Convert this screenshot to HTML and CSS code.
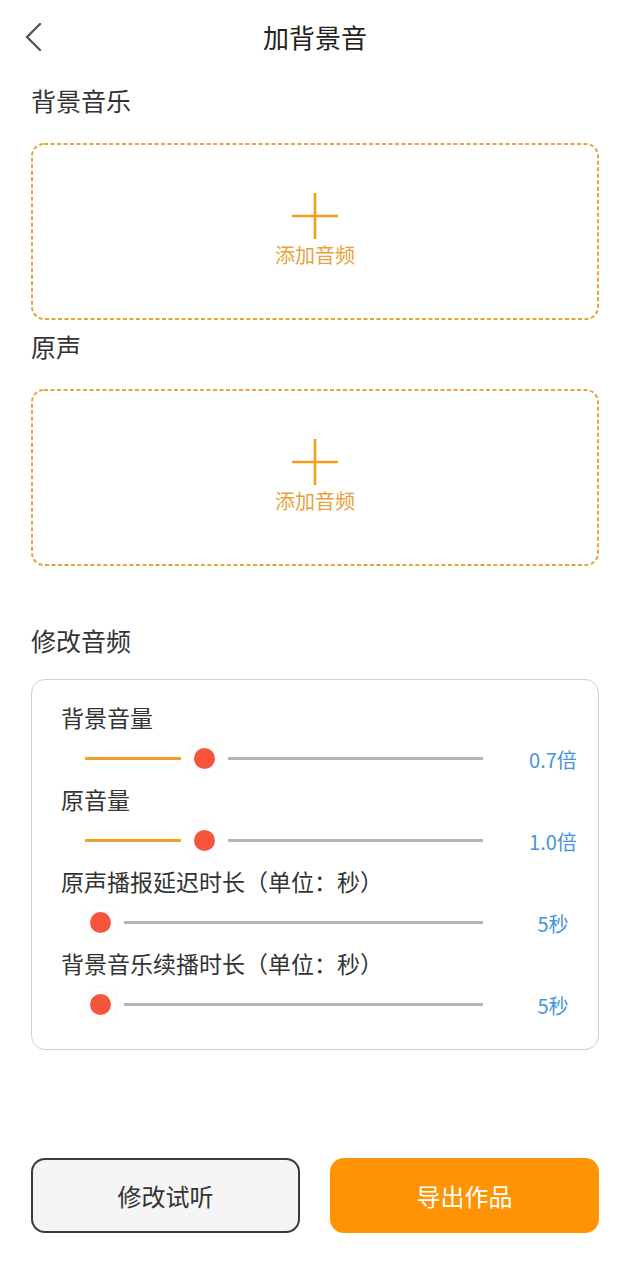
FILE: index.html
```html
<!DOCTYPE html>
<html lang="zh-CN">
<head>
<meta charset="utf-8">
<title>加背景音</title>
<link rel="stylesheet" href="styles.css">
</head>
<body>
<header class="header">
  <span class="back">
    <svg width="18" height="28" viewBox="0 0 18 28"><polyline points="15,1 2,14 15,27" fill="none" stroke="#555" stroke-width="2.4" stroke-linecap="round" stroke-linejoin="round"/></svg>
  </span>
  <h1 class="title">加背景音</h1>
  <span></span>
</header>
<main class="content">
  <div class="section-title">背景音乐</div>
  <div class="dropzone">
    <svg class="dash-border" aria-hidden="true"><rect class="dash-rect" x="1" y="1" rx="12" ry="12"/></svg>
    <svg class="plus" width="46" height="46" viewBox="0 0 46 46"><path d="M0 23H46M23 0V46" stroke="#f29c1f" stroke-width="2.6"/></svg>
    <div class="drop-text">添加音频</div>
  </div>
  <div class="section-title">原声</div>
  <div class="dropzone">
    <svg class="dash-border" aria-hidden="true"><rect class="dash-rect" x="1" y="1" rx="12" ry="12"/></svg>
    <svg class="plus" width="46" height="46" viewBox="0 0 46 46"><path d="M0 23H46M23 0V46" stroke="#f29c1f" stroke-width="2.6"/></svg>
    <div class="drop-text">添加音频</div>
  </div>
  <div class="section-title section-gap">修改音频</div>
  <div class="card">
    <div class="row-label">背景音量</div>
    <div class="slider-row">
      <div class="track">
        <div class="fill" style="width:104px"></div>
        <div class="thumb-wrap"><span class="thumb"></span></div>
        <div class="rest"></div>
      </div>
      <div class="value">0.7倍</div>
    </div>
    <div class="row-label">原音量</div>
    <div class="slider-row">
      <div class="track">
        <div class="fill" style="width:104px"></div>
        <div class="thumb-wrap"><span class="thumb"></span></div>
        <div class="rest"></div>
      </div>
      <div class="value">1.0倍</div>
    </div>
    <div class="row-label">原声播报延迟时长（单位：秒）</div>
    <div class="slider-row">
      <div class="track">
        <div class="fill" style="width:0px"></div>
        <div class="thumb-wrap"><span class="thumb"></span></div>
        <div class="rest"></div>
      </div>
      <div class="value">5秒</div>
    </div>
    <div class="row-label">背景音乐续播时长（单位：秒）</div>
    <div class="slider-row">
      <div class="track">
        <div class="fill" style="width:0px"></div>
        <div class="thumb-wrap"><span class="thumb"></span></div>
        <div class="rest"></div>
      </div>
      <div class="value">5秒</div>
    </div>
  </div>
  <div class="actions">
    <button class="btn btn-outline">修改试听</button>
    <button class="btn btn-primary">导出作品</button>
  </div>
</main>
</body>
</html>
```
FILE: styles.css
```css
* { box-sizing: border-box; }
html, body {
  margin: 0;
  padding: 0;
  background: #fff;
  font-family: "Noto Sans CJK SC", "Noto Sans", sans-serif;
  color: #333;
}
.header {
  height: 74px;
  display: grid;
  grid-template-columns: 80px 1fr 80px;
  align-items: center;
  padding: 0 0 0 25px;
}
.back {
  display: flex;
  align-items: center;
  height: 28px;
}
.title {
  margin: 0;
  text-align: center;
  font-size: 26px;
  font-weight: 400;
  color: #222;
  line-height: 74px;
  padding-right: 25px;
}
.content {
  padding: 0 31px;
}
.section-title {
  height: 52px;
  line-height: 52px;
  font-size: 25px;
  color: #333;
}
.section-gap {
  margin-top: 48px;
}
.dropzone {
  position: relative;
  margin-top: 17px;
  height: 177px;
  display: flex;
  flex-direction: column;
  align-items: center;
  justify-content: center;
  padding-bottom: 4px;
}
.dash-border {
  position: absolute;
  left: 0;
  top: 0;
  width: 100%;
  height: 100%;
  pointer-events: none;
}
.dash-rect {
  width: calc(100% - 2px);
  height: calc(100% - 2px);
  fill: none;
  stroke: #e2a73a;
  stroke-width: 2;
  stroke-dasharray: 4 2.5;
}
.plus { display: block; }
.drop-text {
  margin-top: 5px;
  font-size: 20px;
  line-height: 22px;
  color: #eaa13a;
}
.card {
  margin-top: 13px;
  border: 1.5px solid #cfcfcf;
  border-radius: 14px;
  padding: 21px 2px 20px 29px;
}
.row-label {
  height: 32px;
  line-height: 32px;
  font-size: 23px;
  color: #333;
}
.slider-row {
  height: 50px;
  display: flex;
  align-items: center;
}
.track {
  margin-left: 16px;
  width: 406px;
  flex: none;
  display: flex;
  align-items: center;
}
.fill {
  height: 3px;
  background: linear-gradient(to right, transparent 8px, #f0a02a 8px);
  flex: none;
}
.thumb-wrap {
  width: 47px;
  height: 40px;
  flex: none;
  display: flex;
  align-items: center;
  justify-content: center;
}
.thumb {
  width: 34px;
  height: 34px;
  border-radius: 50%;
  background: #fff;
  box-shadow: 0 0 3px rgba(0, 0, 0, 0.07);
  display: flex;
  align-items: center;
  justify-content: center;
}
.thumb::after {
  content: "";
  width: 21px;
  height: 21px;
  border-radius: 50%;
  background: #f7543e;
}
.rest {
  flex: 1;
  height: 3px;
  background: #b4b4b4;
}
.value {
  margin-left: 30px;
  width: 80px;
  flex: none;
  text-align: center;
  font-size: 20px;
  color: #4495d9;
  padding-top: 2px;
}
.actions {
  margin-top: 108px;
  display: grid;
  grid-template-columns: 1fr 1fr;
  gap: 30px;
}
.btn {
  height: 75px;
  border-radius: 14px;
  font-family: inherit;
  font-size: 24px;
  cursor: pointer;
}
.btn-outline {
  border: 2px solid #3a3a3a;
  background: #f5f5f5;
  color: #333;
}
.btn-primary {
  border: none;
  background: #ff9303;
  color: #fff;
}
```
